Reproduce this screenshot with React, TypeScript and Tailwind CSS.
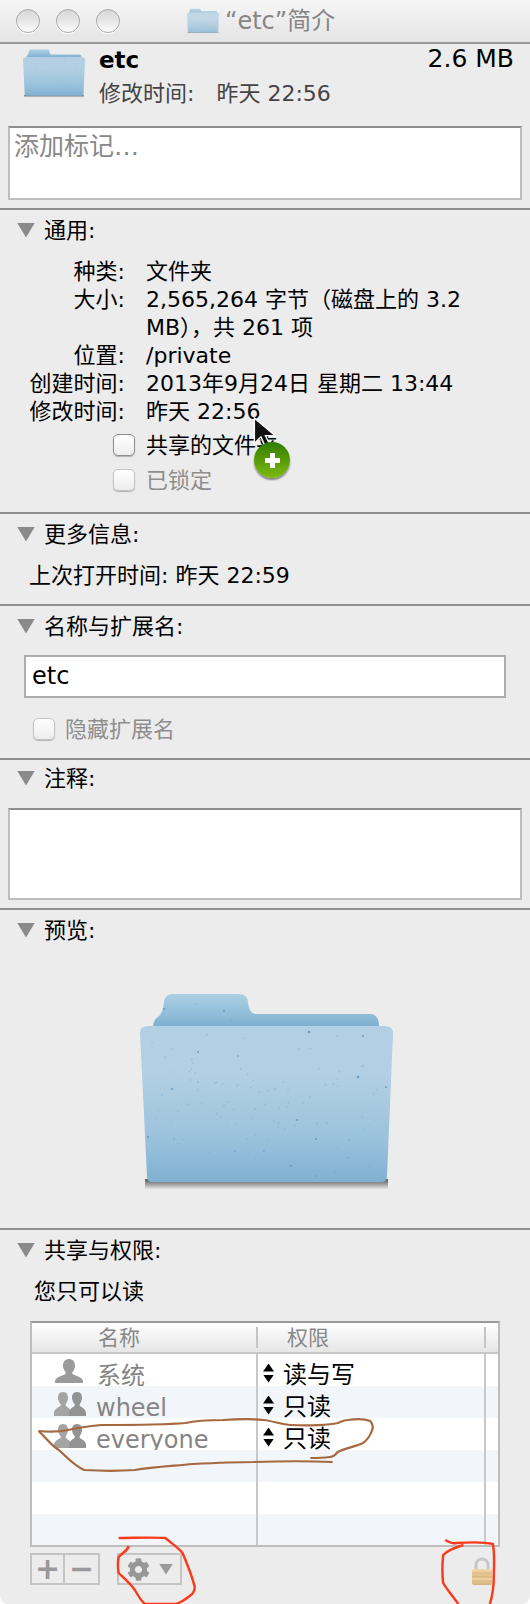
import { FaCog } from 'react-icons/fa'

const font = { fontFamily: '"DejaVu Sans", "Noto Sans CJK SC", sans-serif' }

const specks: [number, number, number][] = [
  [24, 15, 1], [84, 17, 1], [56, 10, 0.5], [91, 26, 0.5], [169, 38, 1.2], [223, 42, 1], [58, 58, 1], [98, 62, 0.8],
  [32, 95, 1], [58, 88, 0.6], [218, 83, 1.2], [246, 93, 1], [135, 95, 0.6], [84, 112, 0.6], [115, 115, 0.6], [134, 127, 0.6],
  [8, 143, 1], [34, 145, 0.7], [157, 126, 1], [177, 129, 0.6], [186, 128, 0.6], [145, 134, 0.6], [176, 145, 1], [209, 146, 0.8],
  [124, 157, 0.7], [95, 157, 0.7], [151, 172, 1], [176, 182, 0.8], [208, 164, 0.7], [230, 172, 0.6], [69, 158, 0.5], [195, 178, 0.5],
]

// faint texture dots, hashed from the index so every render is the same
const hash = (n: number) => {
  const v = Math.sin(n * 12.9898) * 43758.5453
  return v - Math.floor(v)
}
const faintSpecks = Array.from({ length: 90 }, (_, i) => ({
  x: 12 + hash(i + 1) * 228,
  y: 38 + hash(i + 200) * 146,
}))

function FolderIcon({ id, className }: { id: string; className: string }) {
  return (
    <svg viewBox="0 0 253 195" className={className}>
      <defs>
        <linearGradient id={id + 'f'} x1="0" y1="0" x2="0" y2="1">
          <stop offset="0" stopColor="#b2cfe3" />
          <stop offset="0.3" stopColor="#b2d0e4" />
          <stop offset="0.7" stopColor="#9cc3dc" />
          <stop offset="1" stopColor="#80b1d2" />
        </linearGradient>
        <linearGradient id={id + 'b'} x1="0" y1="0" x2="0" y2="1">
          <stop offset="0" stopColor="#acd0e4" />
          <stop offset="1" stopColor="#80b1d2" />
        </linearGradient>
        <linearGradient id={id + 's'} x1="0" y1="0" x2="0" y2="1">
          <stop offset="0" stopColor="#555" />
          <stop offset="1" stopColor="#555" stopOpacity="0.05" />
        </linearGradient>
      </defs>
      <path d="M5 185 H248 V195 H5 Z" fill={'url(#' + id + 's)'} />
      <path
        d="M13 32 Q14 25 18 23 Q23 19 24 8 Q25 0 33 0 H99 Q107 0 108 8 Q109 19 115 20 H231 Q239 21 239 32 Z"
        fill={'url(#' + id + 'b)'}
      />
      <path
        d="M0 39 Q0 32 8 32 H245 Q253 32 253 40 L247 182 Q247 188 241 188 H12 Q7 188 7 182 Z"
        fill={'url(#' + id + 'f)'}
      />
      {faintSpecks.map((s, i) => (
        <circle key={i} cx={s.x} cy={s.y} r="0.8" fill="#7fb0d0" opacity="0.6" />
      ))}
      {specks.map(([x, y, r], i) => (
        <circle key={i} cx={x} cy={y} r={r} fill="#5f9cc6" />
      ))}
    </svg>
  )
}

function Triangle() {
  return <div className="h-[15px] w-[18px] bg-[#8a8a8a] [clip-path:polygon(0_0,100%_0,50%_100%)]" />
}

function SectionHead({ title }: { title: string }) {
  return (
    <div className="flex h-10 items-center pl-[17px]">
      <Triangle />
      <span className="ml-[9px] text-[22px] text-black">{title}</span>
    </div>
  )
}

function Checkbox({ disabled }: { disabled?: boolean }) {
  return (
    <div
      className={
        'h-[22px] w-[22px] rounded-[5px] border bg-gradient-to-b from-white to-[#ededed] shadow-[0_1px_1px_rgba(0,0,0,0.25)] ' +
        (disabled ? 'border-[#c4c4c4]' : 'border-[#8c8c8c]')
      }
    />
  )
}

function Person({ className }: { className: string }) {
  return (
    <svg viewBox="0 0 30 24" className={className}>
      <path
        d="M15 0 C20 0 21 4 21 7 C21 10 19 12 18 14 C19 17 28 17 29 22 V24 H1 V22 C2 17 11 17 12 14 C11 12 9 10 9 7 C9 4 10 0 15 0 Z"
        fill="#9a9a9a"
      />
    </svg>
  )
}

function Group({ className }: { className: string }) {
  return (
    <svg viewBox="0 0 32 24" className={className}>
      <path
        d="M9 0 C13 0 14 3 14 6 C14 9 12 11 11.5 13 C12 15 16 16 17 19 V24 H0 V20 C1 16 6 15 7 13 C6 11 4 9 4 6 C4 3 5 0 9 0 Z"
        fill="#a4a4a4"
      />
      <path
        d="M23 0 C27 0 28 3 28 6 C28 9 26 11 25.5 13 C26 15 31 16 32 20 V24 H15 V20 C16 16 20 15 21 13 C20 11 18 9 18 6 C18 3 19 0 23 0 Z"
        fill="#939393"
      />
    </svg>
  )
}

function Stepper() {
  return (
    <div className="mb-[2px] flex flex-col gap-[3px]">
      <div className="h-[8px] w-[11px] bg-black [clip-path:polygon(50%_0,100%_100%,0_100%)]" />
      <div className="h-[8px] w-[11px] bg-black [clip-path:polygon(0_0,100%_0,50%_100%)]" />
    </div>
  )
}

const rows = [
  { name: '系统', perm: '读与写', icon: 'one', textPad: 'pl-[13px]' },
  { name: 'wheel', perm: '只读', icon: 'group', textPad: 'pl-[10px]' },
  { name: 'everyone', perm: '只读', icon: 'group', textPad: 'pl-[10px]' },
  { name: '', perm: '', icon: '', textPad: '' },
  { name: '', perm: '', icon: '', textPad: '' },
  { name: '', perm: '', icon: '', textPad: '' },
]

export default function App() {
  return (
    <div className="bg-white">
      <div style={font} className="relative h-[1604px] w-[530px] overflow-hidden rounded-b-[8px] bg-[#ececec]">
        {/* Title bar */}
        <div className="relative flex h-[44px] items-center border-b-2 border-[#9a9a9a] bg-gradient-to-b from-[#f6f6f6] to-[#e4e4e4] pl-[16px]">
          <div className="flex gap-[16px]">
            {[0, 1, 2].map((i) => (
              <div
                key={i}
                className="h-[24px] w-[24px] rounded-full border border-[#aaa] bg-gradient-to-b from-[#d6d6d6] via-[#e8e8e8] to-[#fafafa] shadow-[0_1px_0_#fff]"
              />
            ))}
          </div>
          <div className="ml-[67px] flex items-center">
            <FolderIcon id="t" className="h-[26px] w-[32px] opacity-75" />
            <span className="ml-[6px] text-[24px] text-[#868686]">“etc”简介</span>
          </div>
        </div>

        {/* Tags */}
        <div className="h-[166px] border-b-2 border-[#8f8f8f]">
          <div className="flex h-[80px] pl-[23px] pr-[16px] pt-[1px]">
            <FolderIcon id="h" className="mt-[4px] h-[49px] w-[62px]" />
            <div className="ml-[14px] flex-1">
              <div className="flex items-start justify-between">
                <span className="text-[23px] font-bold leading-[30px] text-black">etc</span>
                <span className="text-[25px] leading-[28px] text-black">2.6 MB</span>
              </div>
              <div className="mt-[4px] text-[22px] leading-[30px] text-[#444]">
                修改时间:
                <span className="ml-[22px]">昨天 22:56</span>
              </div>
            </div>
          </div>
          <div className="mx-[8px] mt-[2px] h-[74px] border-2 border-[#bdbdbd] border-t-[#8f8f8f] bg-white px-[4px] text-[25px] leading-[38px] text-[#888]">
            添加标记…
          </div>
        </div>

        {/* General */}
        <div className="h-[304px] border-b-2 border-[#8f8f8f]">
          <SectionHead title="通用:" />
          <div className="mt-[8px] grid grid-cols-[125px_1fr] gap-x-[21px] text-[22px] leading-[28px] text-black">
            <span className="text-right">种类:</span>
            <span>文件夹</span>
            <span className="text-right">大小:</span>
            <span>
              2,565,264 字节（磁盘上的 3.2
              <br />
              MB），共 261 项
            </span>
            <span className="text-right">位置:</span>
            <span>/private</span>
            <span className="text-right">创建时间:</span>
            <span>2013年9月24日 星期二 13:44</span>
            <span className="text-right">修改时间:</span>
            <span>昨天 22:56</span>
          </div>
          <div className="mt-[5px] flex h-[28px] items-center pl-[113px] text-[22px] text-black">
            <Checkbox />
            <span className="ml-[11px]">共享的文件夹</span>
          </div>
          <div className="mt-[7px] flex h-[28px] items-center pl-[113px] text-[22px] text-[#8e8e8e]">
            <Checkbox disabled />
            <span className="ml-[11px]">已锁定</span>
          </div>
        </div>

        {/* More info */}
        <div className="h-[92px] border-b-2 border-[#8f8f8f]">
          <SectionHead title="更多信息:" />
          <div className="mt-[8px] pl-[29px] text-[22px] leading-[28px] text-black">上次打开时间: 昨天 22:59</div>
        </div>

        {/* Name & extension */}
        <div className="h-[154px] border-b-2 border-[#8f8f8f]">
          <SectionHead title="名称与扩展名:" />
          <div className="mx-[24px] mt-[9px] h-[43px] border-2 border-[#adadad] bg-white pl-[6px] text-[24px] leading-[38px] text-black">
            etc
          </div>
          <div className="mt-[17px] flex h-[28px] items-center pl-[33px] text-[22px] text-[#8e8e8e]">
            <Checkbox disabled />
            <span className="ml-[10px]">隐藏扩展名</span>
          </div>
        </div>

        {/* Comments */}
        <div className="h-[150px] border-b-2 border-[#8f8f8f]">
          <div className="-mb-[2px] -translate-y-[2px]">
            <SectionHead title="注释:" />
          </div>
          <div className="mx-[8px] mt-[10px] h-[92px] border-2 border-[#bdbdbd] border-t-[#8f8f8f] bg-white" />
        </div>

        {/* Preview */}
        <div className="h-[320px] border-b-2 border-[#8f8f8f]">
          <SectionHead title="预览:" />
          <div className="mt-[44px] flex justify-center">
            <FolderIcon id="p" className="ml-[2px] h-[195px] w-[253px]" />
          </div>
        </div>

        {/* Sharing & permissions */}
        <div>
          <SectionHead title="共享与权限:" />
          <div className="mt-[8px] pl-[34px] text-[22px] leading-[28px] text-black">您只可以读</div>
          <div className="mx-[30px] mt-[15px] h-[226px] w-[470px] overflow-hidden border-2 border-[#bdbdbd] border-t-[#999]">
            <div className="flex h-[31px] border-b-2 border-[#c8c8c8] bg-gradient-to-b from-white to-[#e6e6e6] text-[21px] text-[#888]">
              <div className="my-[4px] w-[226px] border-r-2 border-[#c4c4c4] pl-[66px] leading-[22px]">名称</div>
              <div className="my-[4px] w-[228px] border-r-2 border-[#c4c4c4] pl-[29px] leading-[22px]">权限</div>
            </div>
            {rows.map((row, i) => (
              <div key={i} className={'flex h-[32px] overflow-hidden ' + (i % 2 ? 'bg-[#f2f5fa]' : 'bg-white')}>
                <div className="flex w-[226px] items-center border-r-2 border-[#c8c8c8] pl-[22px] pt-[8px] text-[24px] leading-[32px] text-[#858585]">
                  {row.icon === 'one' && <Person className="mb-[7px] h-[24px] w-[30px] shrink-0" />}
                  {row.icon === 'group' && <Group className="mb-[5px] h-[24px] w-[32px] shrink-0" />}
                  <span className={'relative top-[2px] ' + row.textPad}>{row.name}</span>
                </div>
                <div className="flex w-[228px] items-center border-r-2 border-[#c8c8c8] pl-[5px] pt-[8px] text-[24px] text-black">
                  {row.perm && <Stepper />}
                  {row.perm && <span className="relative top-[1px] ml-[9px]">{row.perm}</span>}
                </div>
              </div>
            ))}
          </div>
          <div className="mx-[30px] mt-[6px] flex items-center">
            <div className="flex h-[32px] w-[70px] border-2 border-[#c4c4c4] text-[#999]">
              <div className="flex w-[33px] items-center justify-center border-r-2 border-[#c4c4c4] text-[30px] font-bold leading-none">+</div>
              <div className="flex flex-1 items-center justify-center text-[30px] font-bold leading-none">−</div>
            </div>
            <div className="ml-[17px] flex h-[32px] w-[65px] items-center border-2 border-[#c4c4c4] pl-[8px]">
              <FaCog className="h-[23px] w-[23px] text-[#979797]" />
              <div className="ml-[9px] h-[11px] w-[14px] bg-[#999] [clip-path:polygon(0_0,100%_0,50%_100%)]" />
            </div>
          </div>
        </div>

        {/* Padlock */}
        <svg viewBox="0 0 24 30" className="absolute left-[470px] top-[1556px] h-[30px] w-[24px]">
          <defs>
            <linearGradient id="lock" x1="0" y1="0" x2="0" y2="1">
              <stop offset="0" stopColor="#f0d8a8" />
              <stop offset="0.5" stopColor="#e0bd84" />
              <stop offset="0.6" stopColor="#eed3a2" />
              <stop offset="1" stopColor="#d6b07a" />
            </linearGradient>
          </defs>
          <path d="M6 14 V9 C6 1 18 1 18 9 V14" fill="none" stroke="#c6c6c6" strokeWidth="3" />
          <rect x="2" y="13" width="20" height="16" rx="2" fill="url(#lock)" />
          <path d="M2 17 H22 M2 21 H22 M2 25 H22" stroke="#cfa873" strokeWidth="0.7" opacity="0.6" />
        </svg>

        {/* Drag cursor with green plus badge */}
        <svg viewBox="0 0 24 30" className="absolute left-[253px] top-[417px] h-[33px] w-[27px]">
          <path d="M1 1 V24 L7 18 L11 27 L15 25 L11 17 H20 Z" fill="#111" stroke="#fff" strokeWidth="1.2" />
        </svg>
        <div className="absolute left-[254px] top-[442px] flex h-[36px] w-[36px] items-center justify-center rounded-full bg-gradient-to-b from-[#2f7d00] to-[#7dbb12] shadow-[0_2px_2px_rgba(0,0,0,0.45)]">
          <div className="relative h-[15px] w-[15px]">
            <div className="absolute left-[5px] top-0 h-[15px] w-[5px] bg-white" />
            <div className="absolute left-0 top-[5px] h-[5px] w-[15px] bg-white" />
          </div>
        </div>

        {/* Hand drawn annotations */}
        <svg
          viewBox="0 0 522.6 1604"
          preserveAspectRatio="none"
          className="pointer-events-none absolute left-0 top-0 h-[1604px] w-[530px]"
          fill="none"
        >
          <path
            d="M38 1431 C48 1432 58 1432 67 1430 C80 1427 90 1426 100 1425 C130 1425 160 1425 183 1423 C195 1420 205 1420 220 1420 C235 1419 250 1419 260 1420 C270 1421 278 1425 287 1425 C305 1426 325 1425 333 1423 C338 1421 340 1420 343 1420 C350 1419 360 1419 365 1421 C368 1424 368 1427 367 1430 C365 1436 362 1440 358 1443 C350 1447 340 1448 333 1452 C330 1456 328 1457 325 1457 C318 1458 312 1458 306 1458"
            stroke="#a5683f"
            strokeWidth="2.2"
          />
          <path
            d="M38 1431 C46 1438 50 1445 58 1450 C65 1456 72 1465 83 1470 C100 1471 118 1471 133 1470 C150 1467 170 1466 190 1464 C210 1463 230 1462 250 1462 C280 1461 305 1461 328 1462"
            stroke="#a5683f"
            strokeWidth="2.2"
          />
          <path
            d="M117 1538 C130 1538 150 1537 163 1538 C170 1544 176 1548 180 1553 C185 1565 190 1578 192 1587 C192 1592 190 1594 187 1596 C182 1600 178 1603 173 1604 L143 1604 C138 1600 136 1595 133 1590 C128 1583 122 1578 117 1573 C116 1567 116 1562 117 1557 C120 1553 125 1552 127 1546"
            stroke="#fb3a1c"
            strokeWidth="2.4"
          />
          <path
            d="M439 1540 C444 1543 447 1544 450 1543 C465 1542 478 1542 486 1544 C488 1555 487 1565 487 1573 C487 1585 486 1595 483 1604"
            stroke="#fb3a1c"
            strokeWidth="2.4"
          />
          <path
            d="M457 1545 C450 1547 442 1550 437 1555 C436 1565 436 1575 437 1583 C441 1590 447 1597 452 1604"
            stroke="#fb3a1c"
            strokeWidth="2.4"
          />
        </svg>
      </div>
    </div>
  )
}
